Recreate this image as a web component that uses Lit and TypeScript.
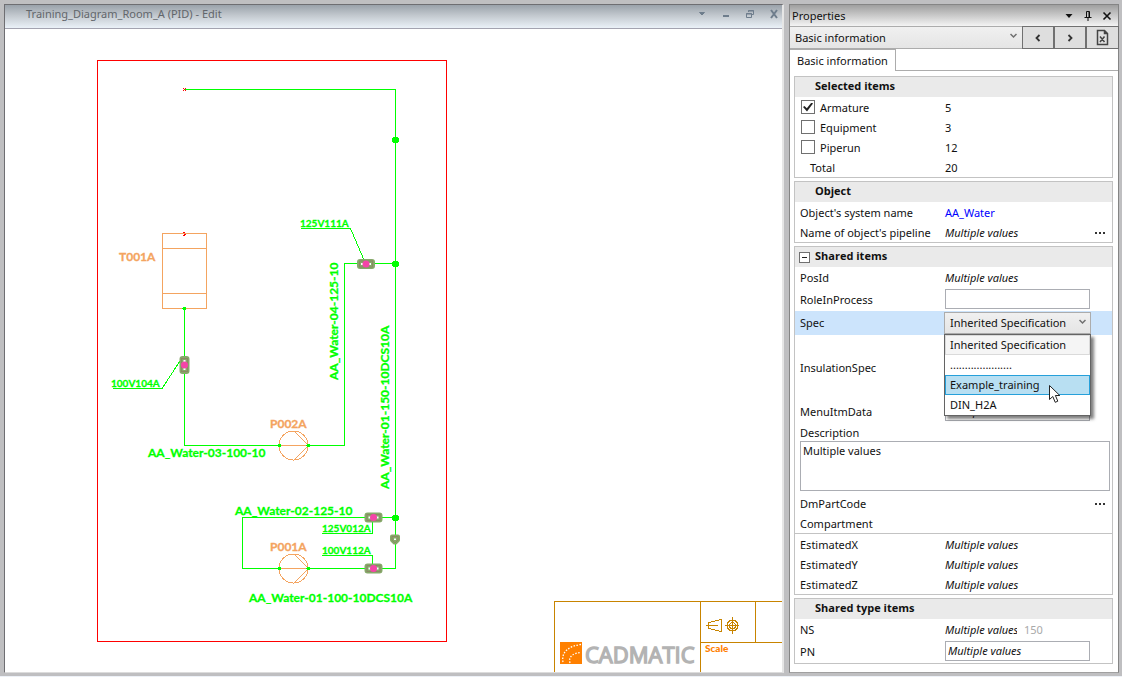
import { LitElement, html, svg, css, nothing } from "lit";
import { customElement, property, state } from "lit/decorators.js";

@customElement("pid-diagram")
class PidDiagram extends LitElement {
  static styles = css`
    :host { display: block; min-height: 0; background: #fff; }
    .canvas { display: block; width: 100%; height: 100%; }
    .line { fill: none; stroke-width: 1; shape-rendering: crispEdges; }
    .frame { stroke: #f00; }
    .pipe { stroke: #0f0; }
    .dot { fill: #0f0; shape-rendering: crispEdges; }
    .unit { stroke: #f4a460; }
    .block { stroke: #c88400; }
    .tag { fill: #0f0; font: 700 12px Lato, sans-serif; stroke: #0f0; stroke-width: .3; }
    .small { fill: #0f0; font: 700 10px Lato, sans-serif; stroke: #0f0; stroke-width: .3; }
    .unit-tag { fill: #f4a460; font: 700 12px Lato, sans-serif; stroke: #f4a460; stroke-width: .3; }
    .scale { fill: #ff8000; font: 900 10px Lato, sans-serif; }
    .brand { fill: #b3b3b3; stroke: #b3b3b3; stroke-width: 1.4; font: 400 22px "Open Sans", sans-serif; }
    .halo { fill: #fff; stroke: #86a96a; stroke-width: 4; }
    .body { fill: none; stroke: #8d7d62; stroke-width: 1; stroke-opacity: .7; }
    .core { fill: #f545a8; }
    .logo { fill: #ff8000; }
    .arc { fill: none; stroke: #fff; stroke-width: 1.3; stroke-dasharray: 1.5 1.5; }
  `;

  private valve(x: number, y: number, upright = false) {
    return svg`<g transform="translate(${x} ${y}) rotate(${upright ? 90 : 0})">
      <rect class="halo" x="-7" y="-3" width="14" height="6" rx="1"></rect>
      <rect class="body" x="-6.500" y="-3" width="13" height="6"></rect>
      <circle class="core" r="3.500"></circle>
    </g>`;
  }

  private pump(x: number, y: number) {
    return svg`<g transform="translate(${x} ${y})">
      <path class="line unit" d="M-14 .5H15M1 -14L15 0M1 15L15 1"></path>
      <circle class="line unit" cx=".5" cy=".5" r="14.500"></circle>
      <circle class="dot" cx="-13.500" cy=".5" r="2"></circle>
      <circle class="dot" cx="15.500" cy=".5" r="2"></circle>
    </g>`;
  }

  render() {
    return html`<svg class="canvas" role="img" aria-label="Piping diagram">
      <g transform="translate(-5 -29)">
        <rect class="line frame" x="97.500" y="60.500" width="349" height="581"></rect>
        <path class="line pipe" d="M185 89.500H395.500V568.500H308"></path>
        <path class="line pipe" d="M184.500 308V445.500H279M308 445.500H344.500V263.500H395"></path>
        <path class="line pipe" d="M395 517.500H242.500V568.500H279"></path>
        <path class="line pipe" d="M301 228.500H350.500L364 260M113 388.500H162L180 361"></path>
        <path class="line pipe" d="M322 533.500H372.500V522M322 555.500H372.500V564"></path>
        <path class="line frame" d="M183 88l3 3M186 88l-3 3M183 232l3 2l-3 2"></path>
        <path class="line unit" d="M162.500 233.500H206.500V308.500H162.500ZM162 248.500H206M162 293.500H206"></path>
        ${this.pump(293, 445)} ${this.pump(293, 568)}
        <circle class="dot" cx="184.500" cy="308.500" r="2"></circle>
        ${[140, 264, 518].map((y) => svg`<circle class="dot" cx="395.500" cy=${y} r="3.500"></circle>`)}
        ${this.valve(366, 264)} ${this.valve(184.5, 365, true)}
        ${this.valve(373.5, 517.5)} ${this.valve(373.5, 568.5)}
        <path class="halo" stroke-linejoin="round" d="M392 536.500H398V540L395.500 542.500H394.500L392 540Z"></path>
        <path class="body" d="M392 536.500H398V540L395.500 542.500H394.500L392 540Z"></path>

        <text class="small" x="300" y="227">125V111A</text>
        <text class="small" x="111" y="387">100V104A</text>
        <text class="small" x="322" y="532">125V012A</text>
        <text class="small" x="322" y="554">100V112A</text>
        <text class="unit-tag" x="119" y="261">T001A</text>
        <text class="unit-tag" x="270" y="428">P002A</text>
        <text class="unit-tag" x="270" y="551">P001A</text>
        <text class="tag" x="148" y="457">AA_Water-03-100-10</text>
        <text class="tag" x="235" y="515">AA_Water-02-125-10</text>
        <text class="tag" x="249" y="602">AA_Water-01-100-10DCS10A</text>
        <text class="tag" transform="translate(338 380) rotate(-90)">AA_Water-04-125-10</text>
        <text class="tag" transform="translate(389 489) rotate(-90)">AA_Water-01-150-10DCS10A</text>

        <path class="line block" d="M554.500 672V601.500H790M700.500 601V672M755.500 601V642M700 642.500H790"></path>
        <path class="line block" d="M706 625.500H718M708.500 622V628.500L721.500 631.500V619.500L708.500 622.500M725 625.500H739M732.500 617V634"></path>
        <circle class="line block" cx="732.500" cy="625.500" r="5.500"></circle>
        <circle class="line block" cx="732.500" cy="625.500" r="3"></circle>
        <text class="scale" x="705" y="652">Scale</text>
        <rect class="logo" x="560" y="642" width="22" height="22"></rect>
        <path class="arc" d="M563 662C561 652 569 646 581 644.500M570 663C568 656 574 653 581 652.500"></path>
        <text class="brand" x="585" y="663">CADMATIC</text>
      </g>
    </svg>`;
  }
}

@customElement("diagram-window")
class DiagramWindow extends LitElement {
  static styles = css`
    :host { display: flex; flex-direction: column; border: 1px solid #6e6e72; border-right: 2px solid #e6e6e6; border-bottom-color: #dcdcdc; }
    .title { display: flex; align-items: center; height: 23px; padding: 0 0 0 21px; background: linear-gradient(#9aa2aa, #c2c8ce 45%, #eaf1f8); border-bottom: 1px solid #a3a3b0; }
    .name { flex: 1; margin: 0 0 5px; font: 400 11px/18px "Noto Sans", sans-serif; color: #62666b; }
    .ctl { width: 24px; height: 18px; margin-bottom: 5px; padding: 0; border: 0; background: none; display: grid; place-items: center; }
    .ctl:last-child { width: 16px; margin-left: 4px; }
    .glyph { display: block; width: 10px; height: 10px; fill: none; stroke: #6e7d8c; }
    pid-diagram { flex: 1; }
  `;

  private control(label: string, path: string, fill = "none", w = 1) {
    return html`<button class="ctl" aria-label=${label}>
      <svg class="glyph" viewBox="0 0 10 10"><path d=${path} fill=${fill} stroke-width=${w}></path></svg>
    </button>`;
  }

  render() {
    return html`
      <header class="title">
        <h1 class="name">Training_Diagram_Room_A (PID) - Edit</h1>
        ${this.control("Window list", "M2.500 3.500h5L5 6z", "#6e7d8c")}
        ${this.control("Minimize", "M2 7h6", "none", 2)}
        ${this.control("Restore", "M3.500 3V1.500h5v4H7M1.500 4.500h5v4h-5zM1 5h6M3 2h6")}
        ${this.control("Close", "M2 1L8 9M8 1L2 9", "none", 2)}
      </header>
      <pid-diagram></pid-diagram>
    `;
  }
}

@customElement("properties-panel")
class PropertiesPanel extends LitElement {
  @property({ attribute: false }) items = [
    { name: "Armature", count: 5, on: true },
    { name: "Equipment", count: 3, on: false },
    { name: "Piperun", count: 12, on: false },
  ];
  @state() private hovered = 2;
  private specs = ["Inherited Specification", ".....................", "Example_training", "DIN_H2A"];

  static styles = css`
    :host { display: flex; flex-direction: column; background: #fff; border: 1px solid #858585; border-bottom-color: #a0a0a0; font: 400 11px/20px "Noto Sans", sans-serif; color: #111; }
    * { box-sizing: border-box; }
    button, input, select, textarea { font: inherit; color: inherit; margin: 0; border-radius: 0; }
    .title { display: flex; align-items: center; height: 21px; padding: 0 2px; background: linear-gradient(#9f9f9f, #f4f4f4); }
    .heading { flex: 1; margin: 0; font: inherit; }
    .icon { width: 19px; height: 20px; padding: 0; border: 0; background: none; display: grid; place-items: center; }
    .glyph { display: block; width: 10px; height: 10px; fill: none; stroke: #111; }
    .toolbar { display: flex; height: 23px; margin-right: -1px; }
    .combo { position: relative; display: flex; }
    .combo.wide { flex: 1; }
    .combo select { width: 100%; appearance: none; border: 1px solid #acacac; background: linear-gradient(#f0f0f0, #e5e5e5); padding: 0 20px 0 5px; outline: 0; }
    .combo.wide select { border-width: 1px 0; }
    .arrow { position: absolute; right: 5px; top: 7px; width: 7px; height: 6px; fill: none; stroke: #707070; stroke-width: 1.5; pointer-events: none; }
    .tool { width: 32px; padding: 0; border: 1px solid #707070; background: #dedede; display: grid; place-items: center; }
    .tool:last-child { width: 33px; }
    .tool .glyph { stroke: #333; }
    .doc { display: block; width: 15px; height: 17px; fill: none; stroke: #444; stroke-width: 1.5; }
    .tabs { display: flex; height: 22px; }
    .tab { border: 1px solid #acacac; border-width: 1px 1px 0 0; background: #fff; padding: 0 7px; }
    .rest { flex: 1; border-bottom: 1px solid #acacac; }
    .body { display: flex; flex-direction: column; gap: 3px; padding: 5px 5px 8px 4px; }
    .group { border: 1px solid #c3c3c3; }
    .head { display: flex; align-items: center; height: 20px; margin: 0; padding: 0 0 2px 4px; background: #eaeaea; font: 700 11px/18px "Open Sans", sans-serif; }
    .lead { width: 16px; flex: none; padding-top: 2px; }
    .toggle { display: grid; place-items: center; width: 11px; height: 11px; padding: 0; border: 1px solid #707070; background: #fff; }
    .toggle::before { content: ""; width: 5px; height: 1px; background: #222; }
    .row { display: grid; grid-template-columns: 145px 1fr; align-items: center; min-height: 20px; padding-left: 5px; }
    .row.low { padding-top: 2px; line-height: 18px; }
    .row.mid { min-height: 22px; }
    .row.spec { min-height: 24px; background: #cce4fc; }
    .row.tall { min-height: 66px; }
    .row.caption { min-height: 18px; padding-top: 2px; line-height: 16px; }
    .row.top .field { align-self: start; }
    .check { display: flex; align-items: center; gap: 5px; }
    .check input { appearance: none; width: 14px; height: 14px; border: 1px solid #707070; background: #fff; display: grid; place-items: center; margin-left: 1px; margin-bottom: 2px; }
    .check input:checked::before { content: ""; width: 10px; height: 9px; background: #212121; clip-path: polygon(0 50%, 15% 38%, 38% 65%, 85% 0, 100% 12%, 40% 100%); }
    .total { padding-left: 10px; }
    .value { display: flex; align-items: center; justify-content: space-between; padding-right: 7px; }
    .value.pair { justify-content: start; gap: 7px; }
    .cut { width: 72px; overflow: hidden; white-space: nowrap; }
    .multi { font-style: italic; }
    .dim { color: #a9a9a9; }
    .link { color: #00f; text-decoration: none; }
    .more { display: flex; gap: 2px; padding: 4px 0; border: 0; background: none; }
    .more i { width: 2px; height: 2px; background: #333; }
    .field { width: 145px; height: 20px; border: 1px solid #abadb3; background: #fff; padding: 0 2px; font-style: italic; }
    .notes { display: block; width: calc(100% - 7px); height: 50px; margin: 0 0 3px 5px; padding: 0 2px; border: 1px solid #abadb3; resize: none; line-height: 18px; }
    .combo.narrow { width: 147px; height: 22px; margin-left: -1px; }
    .menu { position: absolute; z-index: 2; top: 100%; left: 0; right: 0; margin: 0; padding: 0; list-style: none; border: 1px solid #646464; background: #fff; box-shadow: 3px 3px 3px rgba(0, 0, 0, .5); }
    .option { height: 20px; padding-left: 4px; border: 1px solid transparent; line-height: 18px; }
    .option.current { background: #f5f5f5; border-color: #dadada; }
    .option.hover { background: #b8dff2; border-color: #26a0da; }
    .pointer { position: absolute; z-index: 3; left: 104px; top: 72px; width: 14px; height: 20px; fill: #fff; stroke: #222; pointer-events: none; }
    .block { border-top: 1px solid #c3c3c3; }
    .short { min-height: 19px; line-height: 19px; }
  `;

  private arrow() {
    return html`<svg class="arrow" viewBox="0 0 7 6"><path d="M.5 1L3.500 4L6.500 1"></path></svg>`;
  }

  private more(label: string) {
    return html`<button class="more" aria-label=${"Edit " + label}><i></i><i></i><i></i></button>`;
  }

  private multi(label: string, cls = "low", more = false) {
    return html`<div class="row ${cls}">
      <span>${label}</span>
      <span class="value"><span class="multi">Multiple values</span>${more ? this.more(label) : nothing}</span>
    </div>`;
  }

  private input(label: string, id: string, value = "", cls = "") {
    return html`<div class="row mid ${cls}">
      <label for=${id}>${label}</label><input class="field" id=${id} .value=${value}>
    </div>`;
  }

  private head(text: string, toggle = false) {
    return html`<h2 class="head"><span class="lead">${toggle
      ? html`<button class="toggle" aria-label=${"Collapse " + text}></button>` : nothing}</span>${text}</h2>`;
  }

  render() {
    return html`
      <header class="title">
        <h1 class="heading">Properties</h1>
        <button class="icon" aria-label="Options"><svg class="glyph" viewBox="0 0 10 10"><path fill="#111" stroke="none" d="M1.500 3h7L5 7z"></path></svg></button>
        <button class="icon" aria-label="Pin"><svg class="glyph" viewBox="0 0 10 10"><path d="M3.500 6V.5H6.500V6M1.500 6.500H8.500M5 7V10M6 1V6"></path></svg></button>
        <button class="icon" aria-label="Close"><svg class="glyph" viewBox="0 0 10 10"><path stroke-width="1.600" d="M1.500 1.500L8.500 8.500M8.500 1.500L1.500 8.500"></path></svg></button>
      </header>
      <div class="toolbar">
        <span class="combo wide"><select aria-label="Property page"><option>Basic information</option></select>${this.arrow()}</span>
        <button class="tool" aria-label="Previous"><svg class="glyph" viewBox="0 0 10 10"><path stroke-width="1.800" d="M6.500 2L3.500 5L6.500 8"></path></svg></button>
        <button class="tool" aria-label="Next"><svg class="glyph" viewBox="0 0 10 10"><path stroke-width="1.800" d="M3.500 2L6.500 5L3.500 8"></path></svg></button>
        <button class="tool" aria-label="Export to spreadsheet"><svg class="doc" viewBox="0 0 15 17"><path d="M2.500 1.500H9.500L12.500 4.500V15.500H2.500ZM9.500 1.500V4.500H12.500M5 7.500L9.500 13M9.500 7.500L5 13"></path></svg></button>
      </div>
      <div class="tabs" role="tablist">
        <button class="tab" role="tab" aria-selected="true">Basic information</button><span class="rest"></span>
      </div>
      <div class="body">
        <section class="group">
          ${this.head("Selected items")}
          ${this.items.map((it) => html`<div class="row low">
            <label class="check"><input type="checkbox" .checked=${it.on}>${it.name}</label><span>${it.count}</span>
          </div>`)}
          <div class="row low"><span class="total">Total</span><span>20</span></div>
        </section>
        <section class="group">
          ${this.head("Object")}
          <div class="row low"><span>Object's system name</span><a class="link" href="#">AA_Water</a></div>
          ${this.multi("Name of object's pipeline", "low", true)}
        </section>
        <section class="group">
          ${this.head("Shared items", true)}
          ${this.multi("PosId", "mid")}
          ${this.input("RoleInProcess", "role", "", "top")}
          <div class="row spec">
            <label for="spec">Spec</label>
            <span class="combo narrow">
              <select id="spec"><option>Inherited Specification</option></select>${this.arrow()}
              <ul class="menu" role="listbox" aria-label="Spec">
                ${this.specs.map((s, i) => html`<li role="option" aria-selected=${i === 0}
                  class="option ${i === 0 ? "current" : ""} ${i === this.hovered ? "hover" : ""}"
                  @mouseenter=${() => { this.hovered = i; }}>${s}</li>`)}
              </ul>
              <svg class="pointer" viewBox="0 0 14 20"><path d="M1.500 1.500V15.500L4.800 12.500L7.200 18.300L9.800 17.200L7.400 11.500H11.800Z"></path></svg>
            </span>
          </div>
          <div class="row tall"><span>InsulationSpec</span></div>
          ${this.input("MenuItmData", "menu-data", "Multiple values", "top")}
          <div class="row caption"><label for="notes">Description</label></div>
          <textarea class="notes" id="notes" .value=${"Multiple values"}></textarea>
          <div class="row"><span>DmPartCode</span><span class="value"><span></span>${this.more("DmPartCode")}</span></div>
          <div class="row short"><span>Compartment</span></div>
          <div class="block">
            ${this.multi("EstimatedX")} ${this.multi("EstimatedY")} ${this.multi("EstimatedZ")}
          </div>
        </section>
        <section class="group">
          ${this.head("Shared type items")}
          <div class="row mid"><span>NS</span><span class="value pair"><span class="multi cut">Multiple values</span><span class="dim">150</span></span></div>
          ${this.input("PN", "pn", "Multiple values", "top")}
        </section>
      </div>
    `;
  }
}

@customElement("app-root")
class AppRoot extends LitElement {
  static styles = css`
    :host { display: block; }
    .desk { box-sizing: border-box; display: grid; grid-template-columns: minmax(0, 1fr) 330px; gap: 5px; min-height: 100vh; padding: 4px 3px 3px 4px; background: #bfbfc1; border-bottom: 1px solid #edf1f7; }
  `;

  render() {
    return html`<main class="desk">
      <diagram-window></diagram-window>
      <properties-panel></properties-panel>
    </main>`;
  }
}
